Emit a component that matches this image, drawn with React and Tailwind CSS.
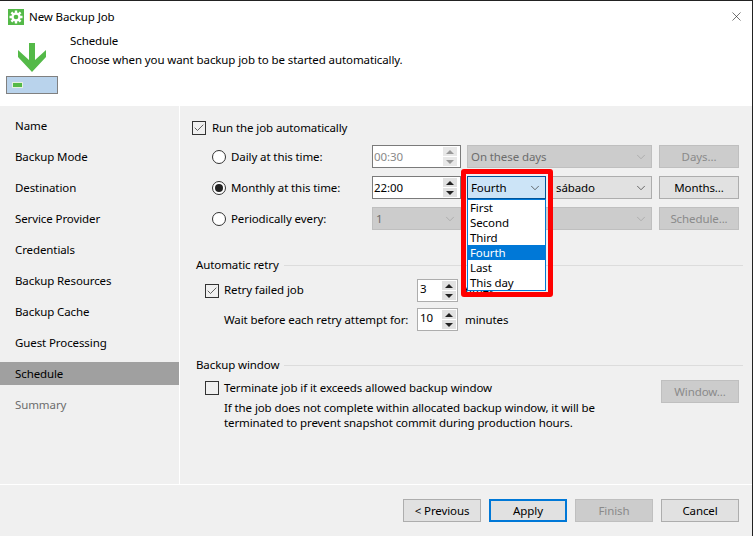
import { Check, ChevronDown, X } from "lucide-react";

const steps = [
  "Name",
  "Backup Mode",
  "Destination",
  "Service Provider",
  "Credentials",
  "Backup Resources",
  "Backup Cache",
  "Guest Processing",
  "Schedule",
  "Summary",
];

const dropdownItems = ["First", "Second", "Third", "Fourth", "Last", "This day"];

function CheckBox({ checked }) {
  return (
    <span className="w-[14px] h-[14px] border border-[#333] bg-[#f0f0f0] flex items-center justify-center shrink-0">
      {checked && <Check size={12} strokeWidth={1.5} className="text-[#333]" />}
    </span>
  );
}

function Radio({ checked }) {
  return (
    <span className="w-[14px] h-[14px] rounded-full border border-[#333] bg-white flex items-center justify-center shrink-0">
      {checked && <span className="w-[8px] h-[8px] rounded-full bg-[#222]" />}
    </span>
  );
}

function Arrows({ disabled }) {
  const color = disabled ? "border-b-[#999]" : "border-b-[#222]";
  const colorTop = disabled ? "border-t-[#999]" : "border-t-[#222]";
  return (
    <div className="w-[14px] h-[19px] flex flex-col gap-[1px] shrink-0">
      <div className={`flex-1 flex items-center justify-center ${disabled ? "bg-[#e8e8e8]" : "bg-[#e1e1e1]"}`}>
        <span className={`w-0 h-0 border-x-[4px] border-x-transparent border-b-[4px] ${color}`} />
      </div>
      <div className={`flex-1 flex items-center justify-center ${disabled ? "bg-[#e8e8e8]" : "bg-[#e1e1e1]"}`}>
        <span className={`w-0 h-0 border-x-[4px] border-x-transparent border-t-[4px] ${colorTop}`} />
      </div>
    </div>
  );
}

function Spinner({ value, width, disabled, compact }) {
  return (
    <div
      className={`${width} h-[23px] bg-white border flex items-center justify-between pl-[1px] shrink-0 ${
        compact ? "border-[#adadad] pr-[1px]" : "border-[#7a7a7a] pr-[3px]"
      } ${disabled ? "text-[#8a8a8a]" : "text-black"}`}
    >
      <span className={compact ? "pb-[4px] pl-[1px]" : ""}>{value}</span>
      <Arrows disabled={disabled} />
    </div>
  );
}

function Select({ value, width, disabled }) {
  return (
    <div
      className={`${width} h-[23px] border flex items-center justify-between pl-[3px] pr-[3px] shrink-0 ${
        disabled ? "bg-[#cccccc] border-[#bfbfbf] text-[#6d6d6d]" : "bg-[#e1e1e1] border-[#adadad] text-black"
      }`}
    >
      <span>{value}</span>
      <ChevronDown size={14} strokeWidth={1.2} className={disabled ? "text-[#a0a0a0]" : "text-[#333]"} />
    </div>
  );
}

function Btn({ label, disabled, primary, width = "w-[78px]" }) {
  return (
    <div
      className={`${width} h-[23px] flex items-center justify-center shrink-0 ${
        disabled
          ? "border bg-[#cccccc] border-[#bfbfbf] text-[#8a8a8a]"
          : primary
            ? "bg-[#e1e1e1] border-2 border-[#0078d7] text-black"
            : "border bg-[#e1e1e1] border-[#adadad] text-black"
      }`}
    >
      {label}
    </div>
  );
}

function GroupTitle({ text }) {
  return (
    <div className="flex items-center gap-[5px] h-[16px] pl-[16px] pr-[9px]">
      <span>{text}</span>
      <span className="flex-1 h-px bg-[#dcdcdc]" />
    </div>
  );
}

function GearLogo() {
  return (
    <svg width="16" height="16" viewBox="0 0 16 16" className="block shrink-0">
      <rect width="16" height="16" fill="#54b948" />
      <g stroke="#fff" strokeWidth="2.4">
        <path d="M8 1.5v13M1.5 8h13M3.4 3.4l9.2 9.2M12.6 3.4l-9.2 9.2" />
      </g>
      <circle cx="8" cy="8" r="4.6" fill="#fff" />
      <circle cx="8" cy="8" r="2.3" fill="#54b948" />
    </svg>
  );
}

export default function App() {
  return (
    <div
      className="relative w-[753px] h-[536px] overflow-hidden bg-[#f0f0f0] border-r border-[#222] text-[11.5px] tracking-[-0.1px] leading-[16px] text-black flex flex-col"
      style={{ fontFamily: '"Noto Sans", "Open Sans", sans-serif' }}
    >
      <div className="h-px bg-[#222]" />

      {/* Title + header */}
      <div className="bg-white h-[105px] shrink-0">
        <div className="h-[31px] flex items-center pl-[8px] pr-[8px]">
          <GearLogo />
          <span className="ml-[5px]">New Backup Job</span>
          <X size={15} strokeWidth={1} className="ml-auto text-[#222]" />
        </div>
        <div className="flex">
          <div className="w-[70px] pl-[6px] pt-[11px] shrink-0">
            <svg width="52" height="30" viewBox="0 0 52 30" className="block">
              <path d="M23 0h6v17l11-10v7L26 29 12 14V7l11 10z" fill="#54b948" />
            </svg>
            <div className="w-[52px] h-[18px] mt-[3px] bg-[#b9d3ec] border border-[#808080] flex items-center pl-[5px]">
              <span className="w-[11px] h-[6px] bg-[#54b948] border border-[#e3f1e0]" />
            </div>
          </div>
          <div className="pt-[1px]">
            <div className="h-[18px]">Schedule</div>
            <div className="h-[18px] mt-px">Choose when you want backup job to be started automatically.</div>
          </div>
        </div>
      </div>

      {/* Body */}
      <div className="flex flex-1 min-h-0">
        <nav className="w-[179px] pt-[8px] flex flex-col gap-[8px] shrink-0">
          {steps.map((step) => (
            <div
              key={step}
              className={`h-[23px] pl-[15px] flex items-center ${step === "Schedule" ? "bg-[#a0a0a0]" : ""} ${
                step === "Summary" ? "text-[#6d6d6d]" : ""
              }`}
            >
              {step}
            </div>
          ))}
        </nav>
        <div className="w-px bg-white shrink-0" />

        <div className="flex-1 flex flex-col min-w-0">
          <div className="flex-1 pt-[14px] min-h-0">
            <div className="flex items-center gap-[6px] h-[16px] pl-[12px]">
              <CheckBox checked />
              <span>Run the job automatically</span>
            </div>

            <div className="mt-[9px] flex flex-col gap-[8px] pl-[32px]">
              <div className="flex items-center h-[23px]">
                <div className="w-[160px] flex items-center gap-[5px]">
                  <Radio />
                  <span>Daily at this time:</span>
                </div>
                <Spinner value="00:30" width="w-[89px]" disabled />
                <div className="ml-[6px]">
                  <Select value="On these days" width="w-[185px]" disabled />
                </div>
                <div className="ml-[7px]">
                  <Btn label="Days..." disabled width="w-[80px]" />
                </div>
              </div>
              <div className="flex items-center h-[23px]">
                <div className="w-[160px] flex items-center gap-[5px]">
                  <Radio checked />
                  <span>Monthly at this time:</span>
                </div>
                <Spinner value="22:00" width="w-[89px]" />
                <div className="ml-[6px] w-[85px]" />
                <Select value="sábado" width="w-[100px]" />
                <div className="ml-[7px]">
                  <Btn label="Months..." width="w-[80px]" />
                </div>
              </div>
              <div className="flex items-center h-[23px]">
                <div className="w-[160px] flex items-center gap-[5px]">
                  <Radio />
                  <span>Periodically every:</span>
                </div>
                <Select value="1" width="w-[89px]" disabled />
                <div className="ml-[6px]">
                  <Select value="" width="w-[185px]" disabled />
                </div>
                <div className="ml-[7px]">
                  <Btn label="Schedule..." disabled width="w-[80px]" />
                </div>
              </div>
            </div>

            <div className="mt-[27px]">
              <GroupTitle text="Automatic retry" />
            </div>
            <div className="mt-[6px] flex items-center h-[23px] pl-[25px]">
              <CheckBox checked />
              <span className="ml-[5px] w-[193px] whitespace-nowrap pb-[1px]">Retry failed job</span>
              <Spinner value="3" width="w-[41px]" compact />
              <span className="ml-[7px]">times</span>
            </div>
            <div className="mt-[6px] flex items-center h-[23px] pl-[44px]">
              <span className="w-[193px] whitespace-nowrap">Wait before each retry attempt for:</span>
              <Spinner value="10" width="w-[41px]" compact />
              <span className="ml-[7px]">minutes</span>
            </div>

            <div className="mt-[26px]">
              <GroupTitle text="Backup window" />
            </div>
            <div className="mt-[7px] flex pl-[25px] pr-[13px]">
              <div className="pt-[1px]">
                <CheckBox />
              </div>
              <div className="ml-[5px] flex-1">
                <div className="h-[16px]">Terminate job if it exceeds allowed backup window</div>
                <div className="mt-[4px] leading-[15px]">
                  <div>If the job does not complete within allocated backup window, it will be</div>
                  <div>terminated to prevent snapshot commit during production hours.</div>
                </div>
              </div>
              <Btn label="Window..." disabled />
            </div>
          </div>
        </div>
      </div>

      {/* Footer */}
      <div className="h-[52px] shrink-0 border-t border-white flex justify-end items-start gap-[8px] pt-[14px] pr-[13px]">
        <Btn label="< Previous" />
        <Btn label="Apply" primary />
        <Btn label="Finish" disabled />
        <Btn label="Cancel" />
      </div>

      {/* Open combo box with red callout */}
      <div className="absolute left-[461px] top-[169px] w-[92px] h-[128px] border-[5px] border-[#ff0000] rounded-[3px] pl-[1px] pt-[2px]">
        <div className="w-[79px] h-[23px] bg-[#cce4f7] border border-[#005499] flex items-center justify-between pl-[3px] pr-[3px] text-black">
          <span>Fourth</span>
          <ChevronDown size={14} strokeWidth={1.2} className="text-[#333]" />
        </div>
        <div className="w-[79px] h-[92px] bg-white border border-[#0078d7] text-black">
          {dropdownItems.map((item) => (
            <div
              key={item}
              className={`h-[15px] leading-[15px] pl-[2px] ${item === "Fourth" ? "bg-[#0078d7] text-white" : ""}`}
            >
              {item}
            </div>
          ))}
        </div>
      </div>
    </div>
  );
}
